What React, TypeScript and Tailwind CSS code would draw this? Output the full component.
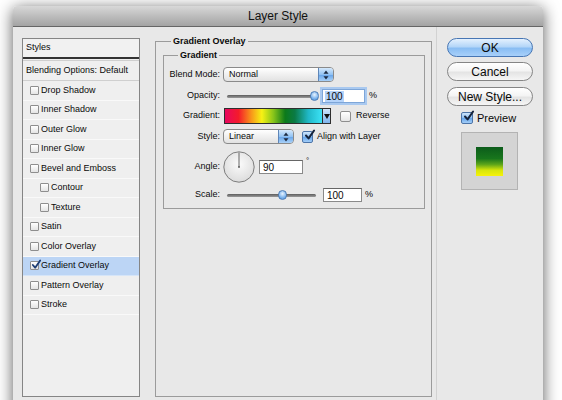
import React from "react";

function Check({ className }: { className: string }) {
  return (
    <svg viewBox="0 0 12 12" className={className} style={{ overflow: "visible" }}>
      <path d="M2.2 6 L5 9.2 L11 0.5" fill="none" stroke="currentColor" strokeWidth="2.2" strokeLinecap="round" strokeLinejoin="round" />
    </svg>
  );
}

function ListBox({ checked }: { checked?: boolean }) {
  return (
    <div className="relative w-[9px] h-[9px] shrink-0 border border-[#8e8e8e] bg-[linear-gradient(to_bottom,#ffffff,#e4e4e4)] rounded-[1px]">
      {checked && <Check className="absolute left-[0px] top-[-2px] w-[10px] h-[10px] text-[#1d3d74]" />}
    </div>
  );
}

function AquaBox({ checked, size }: { checked?: boolean; size: string }) {
  return (
    <div
      className={
        "relative shrink-0 rounded-[2px] border " +
        size +
        (checked
          ? " border-[#4c74a8] bg-[linear-gradient(to_bottom,#cfe5fb,#8ec0f2_50%,#6aa8ec_55%,#a3cdf7)]"
          : " border-[#8e8e8e] bg-[linear-gradient(to_bottom,#ffffff,#e6e6e6)]")
      }
    >
      {checked && <Check className="absolute left-[1px] top-[-2px] w-[11px] h-[11px] text-[#16233b]" />}
    </div>
  );
}

function Stepper({ className }: { className: string }) {
  return (
    <div
      className={
        "flex items-center justify-center border-l border-[#5f86b8] bg-[linear-gradient(to_bottom,#d5e9fc,#93c3f3_50%,#6aa7ea_55%,#a9d1f8)] rounded-r-[3px] " +
        className
      }
    >
      <svg viewBox="0 0 6 10" className="w-[6px] h-[10px]">
        <polygon points="3,0.5 5.5,3.8 0.5,3.8" fill="#1c2a40" />
        <polygon points="3,9.5 5.5,6.2 0.5,6.2" fill="#1c2a40" />
      </svg>
    </div>
  );
}

const listItems: { label: string; indent?: boolean; checked?: boolean }[] = [
  { label: "Drop Shadow" },
  { label: "Inner Shadow" },
  { label: "Outer Glow" },
  { label: "Inner Glow" },
  { label: "Bevel and Emboss" },
  { label: "Contour", indent: true },
  { label: "Texture", indent: true },
  { label: "Satin" },
  { label: "Color Overlay" },
  { label: "Gradient Overlay", checked: true },
  { label: "Pattern Overlay" },
  { label: "Stroke" },
];

export default function App() {
  return (
    <div className="w-[562px] h-[400px] overflow-hidden bg-white pt-[6px] pl-[13px] font-['Liberation_Sans',Arial,sans-serif] text-[#0a0a0a]">
      <div className="w-[530px] h-[420px] flex flex-col rounded-t-[4px] shadow-[0_3px_16px_rgba(0,0,0,0.65)]">
        {/* title bar */}
        <div className="h-[21px] shrink-0 flex items-center justify-center rounded-t-[4px] border-b border-[#666] bg-[linear-gradient(to_bottom,#d8d8d8,#bdbdbd_50%,#a4a4a4)] text-[12px] text-[#111]">
          Layer Style
        </div>

        {/* body */}
        <div className="flex-1 flex items-start bg-[#e8e8e8] pl-[9px]">
          {/* styles list */}
          <div className="mt-[11px] w-[118px] h-[359px] shrink-0 flex flex-col border border-[#858585] bg-[#efefef] text-[9px]">
            <div className="h-[20px] shrink-0 flex items-center pl-[3px] border-b-2 border-[#333] bg-[#f1f1f1]">
              Styles
            </div>
            <div className="h-[21px] shrink-0 flex items-center pl-[3px] mt-[1px] border-t border-[#cfcfcf] border-b border-[#555]">
              Blending Options: Default
            </div>
            {listItems.map((it) => (
              <div
                key={it.label}
                className={
                  "h-[19.5px] shrink-0 flex items-center gap-[2px] border-b " +
                  (it.indent ? "pl-[17px] " : "pl-[7px] ") +
                  (it.checked ? "bg-[#bcd5f5] border-[#d6e5f8]" : "border-[#f9f9f9]")
                }
              >
                <ListBox checked={it.checked} />
                <span>{it.label}</span>
              </div>
            ))}
          </div>

          {/* middle group */}
          <fieldset className="ml-[15px] mt-[8px] w-[277px] h-[362px] shrink-0 border border-[#9b9b9b] pl-[7px] pr-[6px]">
            <legend className="ml-[8px] px-[2px] text-[9px] leading-[12px] font-bold">Gradient Overlay</legend>
            <fieldset className="mt-[2px] h-[160px] border border-[#9b9b9b] text-[9px]">
              <legend className="ml-[14px] px-[2px] text-[9px] leading-[12px] font-bold">Gradient</legend>

              {/* Blend Mode */}
              <div className="mt-[6px] h-[15px] flex items-center">
                <div className="w-[56px] text-right">Blend Mode:</div>
                <div className="ml-[3px] w-[111px] h-[15px] flex rounded-[4px] border border-[#8a8a8a] bg-[linear-gradient(to_bottom,#ffffff,#f0f0f0_50%,#e2e2e2)]">
                  <div className="flex-1 flex items-center pl-[5px]">Normal</div>
                  <Stepper className="w-[15px]" />
                </div>
              </div>

              {/* Opacity */}
              <div className="mt-[7px] h-[14px] flex items-center">
                <div className="w-[56px] text-right">Opacity:</div>
                <div className="ml-[7px] relative w-[91px] h-[10px] flex items-center">
                  <div className="w-full h-[3px] rounded-full bg-[linear-gradient(to_bottom,#5c5c5c,#9a9a9a)]" />
                  <div className="absolute left-[83px] top-[0px] w-[9px] h-[10px] rounded-full border border-[#4d7db6] bg-[radial-gradient(circle_at_50%_35%,#e8f3fe,#7cb4ee_60%,#4f8fd8)]" />
                </div>
                <div className="ml-[4px] w-[43px] h-[14px] flex items-center border border-[#7ea6d8] bg-white pl-[2px] shadow-[0_0_0_2px_#a9c9f0] text-[10px]">
                  <span className="bg-[#b4d3fa] px-[1px] leading-[11px]">100</span>
                </div>
                <span className="ml-[4px]">%</span>
              </div>

              {/* Gradient */}
              <div className="mt-[5px] h-[16px] flex items-center">
                <div className="w-[56px] text-right">Gradient:</div>
                <div className="ml-[4px] flex h-[16px] border border-[#2e2e2e]">
                  <div className="w-[97px] h-full bg-[linear-gradient(to_right,#e8075f_0%,#f41b2a_14%,#f8961a_27%,#f6f214_38%,#86c41a_50%,#0c7a1a_62%,#0a7a45_72%,#20b8c8_86%,#3ce2f6_100%)]" />
                  <div className="w-[8px] h-full flex items-center justify-center border-l border-[#2e2e2e] bg-[linear-gradient(to_bottom,#cfe5fb,#7fb5ee)]">
                    <svg viewBox="0 0 6 5" className="w-[6px] h-[5px]">
                      <polygon points="0,0 6,0 3,5" fill="#111" />
                    </svg>
                  </div>
                </div>
                <div className="ml-[9px]">
                  <AquaBox size="w-[11px] h-[11px]" />
                </div>
                <span className="ml-[5px]">Reverse</span>
              </div>

              {/* Style */}
              <div className="mt-[5px] h-[15px] flex items-center">
                <div className="w-[56px] text-right">Style:</div>
                <div className="ml-[3px] w-[71px] h-[15px] flex rounded-[4px] border border-[#8a8a8a] bg-[linear-gradient(to_bottom,#ffffff,#f0f0f0_50%,#e2e2e2)]">
                  <div className="flex-1 flex items-center pl-[5px]">Linear</div>
                  <Stepper className="w-[15px]" />
                </div>
                <div className="ml-[8px]">
                  <AquaBox checked size="w-[11px] h-[12px]" />
                </div>
                <span className="ml-[4px]">Align with Layer</span>
              </div>

              {/* Angle */}
              <div className="mt-[7px] h-[32px] flex items-center">
                <div className="w-[56px] text-right">Angle:</div>
                <svg viewBox="0 0 32 32" className="ml-[3px] w-[32px] h-[32px]">
                  <defs>
                    <radialGradient id="dial" cx="50%" cy="40%" r="60%">
                      <stop offset="0%" stopColor="#fbfbfb" />
                      <stop offset="100%" stopColor="#dcdcdc" />
                    </radialGradient>
                  </defs>
                  <circle cx="16" cy="16" r="15.2" fill="url(#dial)" stroke="#7d7d7d" strokeWidth="1" />
                  <line x1="16" y1="16" x2="16" y2="1.5" stroke="#555" strokeWidth="0.9" />
                  <circle cx="16" cy="16" r="0.9" fill="#555" />
                </svg>
                <div className="ml-[4px] w-[44px] h-[14px] flex items-center border border-[#8a8a8a] border-t-[#666] bg-white pl-[3px] text-[10px]">
                  90
                </div>
                <span className="ml-[3px] self-start mt-[4px] text-[8px]">°</span>
              </div>

              {/* Scale */}
              <div className="mt-[5px] h-[14px] flex items-center">
                <div className="w-[56px] text-right">Scale:</div>
                <div className="ml-[7px] relative w-[89px] h-[10px] flex items-center">
                  <div className="w-full h-[3px] rounded-full bg-[linear-gradient(to_bottom,#5c5c5c,#9a9a9a)]" />
                  <div className="absolute left-[51px] top-[0px] w-[9px] h-[10px] rounded-full border border-[#4d7db6] bg-[radial-gradient(circle_at_50%_35%,#e8f3fe,#7cb4ee_60%,#4f8fd8)]" />
                </div>
                <div className="ml-[7px] w-[39px] h-[14px] flex items-center border border-[#8a8a8a] border-t-[#666] bg-white pl-[3px] text-[10px]">
                  100
                </div>
                <span className="ml-[3px]">%</span>
              </div>
            </fieldset>
          </fieldset>

          {/* right column */}
          <div className="ml-[4px] self-stretch border-l border-[#d2d2d2] pl-[10px] pt-[11px] flex flex-col">
            <div className="w-[86px] h-[19px] flex items-center justify-center rounded-full border border-[#4776b4] bg-[linear-gradient(to_bottom,#e4f1fe_0%,#b4d6f8_45%,#89bdf3_55%,#a8d0fa_100%)] text-[12px]">
              OK
            </div>
            <div className="mt-[5px] w-[86px] h-[19px] flex items-center justify-center rounded-full border border-[#858585] bg-[linear-gradient(to_bottom,#ffffff,#f4f4f4_45%,#e4e4e4_55%,#f6f6f6)] text-[12px]">
              Cancel
            </div>
            <div className="mt-[6px] w-[86px] h-[19px] flex items-center justify-center rounded-full border border-[#858585] bg-[linear-gradient(to_bottom,#ffffff,#f4f4f4_45%,#e4e4e4_55%,#f6f6f6)] text-[12px]">
              New Style...
            </div>
            <div className="mt-[6px] h-[12px] flex items-center pl-[14px]">
              <AquaBox checked size="w-[12px] h-[12px]" />
              <span className="ml-[4px] text-[11px]">Preview</span>
            </div>
            <div className="mt-[8px] ml-[14px] w-[57px] h-[58px] flex items-center justify-center border border-[#b3b3b3] bg-[#d4d4d4]">
              <div className="w-[27px] h-[29px] bg-[linear-gradient(to_bottom,#0c5c1b_0%,#18761c_40%,#5da51a_60%,#d7e60a_80%,#f7f20a_100%)]" />
            </div>
          </div>
        </div>
      </div>
    </div>
  );
}
